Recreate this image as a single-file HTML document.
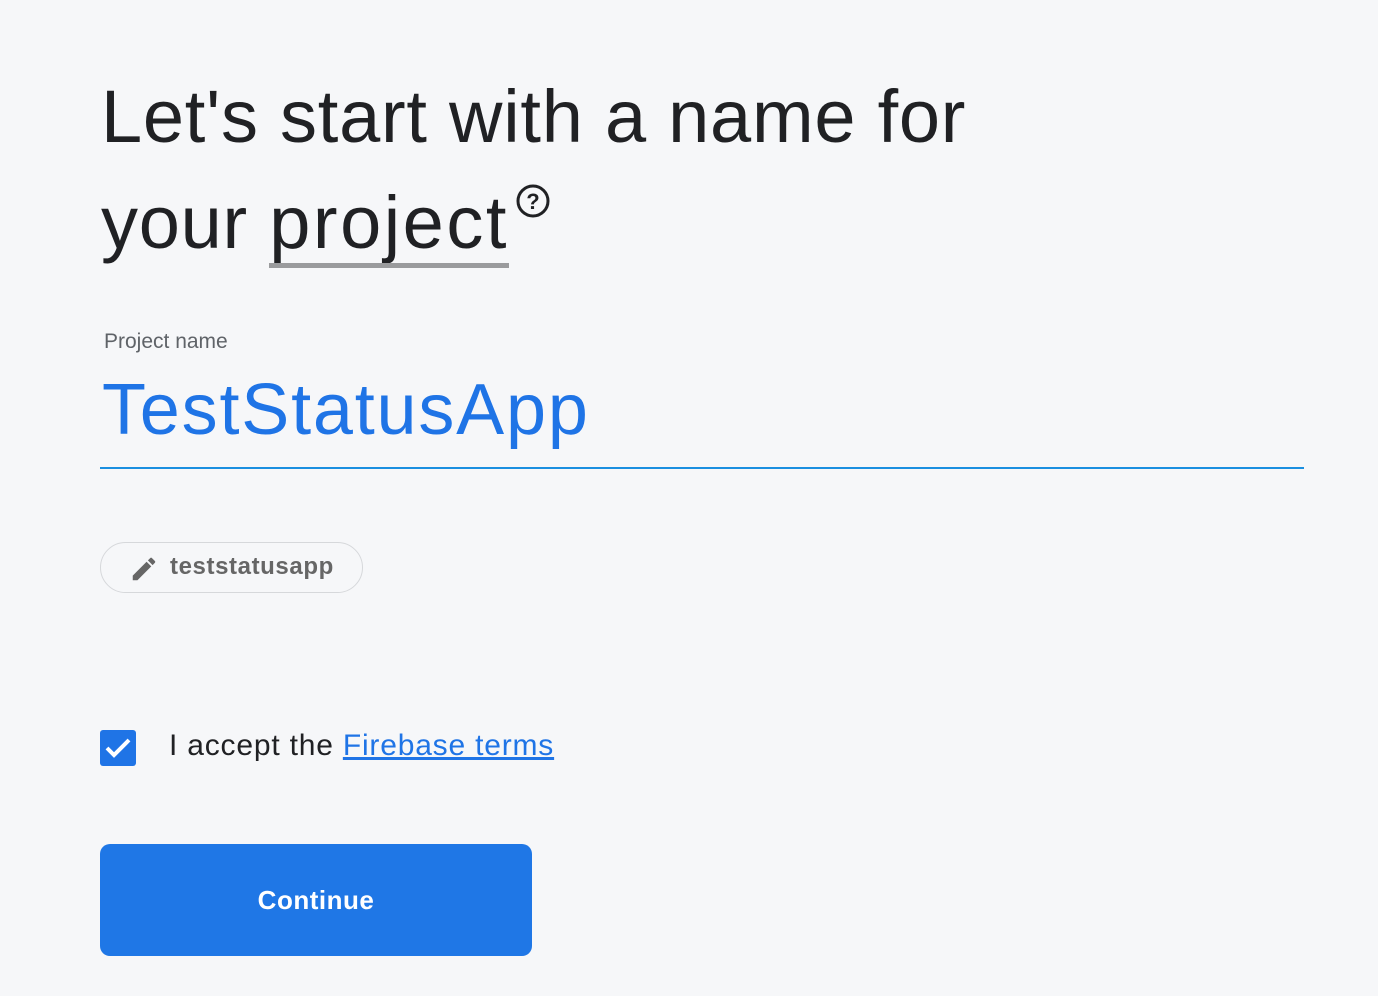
<!DOCTYPE html>
<html><head><meta charset="utf-8"><style>
body{margin:0;background:#f6f7f9;width:1378px;height:996px;overflow:hidden;font-family:"Liberation Sans",sans-serif;position:relative}
.h{position:absolute;left:101px;font-size:74px;color:#202124;letter-spacing:0.75px;white-space:nowrap;line-height:1}
.lbl{position:absolute;left:104px;top:330px;font-size:21px;color:#5f6368}
.name{position:absolute;left:102px;top:374px;font-size:72px;color:#1f74e6;line-height:1;letter-spacing:1.8px}
.line{position:absolute;left:100px;top:467px;width:1204px;height:2px;background:#1a8fe0}
.chip{position:absolute;left:100px;top:542px;width:261px;height:49px;border:1.5px solid #d6d8db;border-radius:26px}
.chip span{position:absolute;left:69px;top:10px;font-size:24px;color:#666;font-weight:bold;letter-spacing:0.6px}
.cb{position:absolute;left:100px;top:730px;width:36px;height:36px;background:#1f74e6;border-radius:3px}
.acc{position:absolute;left:169px;top:729px;font-size:30px;color:#202124;letter-spacing:0.8px}
.acc a{color:#1f74e6;text-decoration:underline}
.btn{position:absolute;left:100px;top:844px;width:432px;height:112px;background:#1f77e6;border-radius:10px;color:#fff;font-size:26px;font-weight:bold;text-align:center;line-height:112px;letter-spacing:0.5px}
</style></head><body>
<div class="h" style="top:80px">Let's start with a name for</div>
<div class="h" style="top:186px">your <span style="position:relative;letter-spacing:2.5px">project<span style="position:absolute;left:0;right:0;bottom:-4px;height:5px;background:#9a9b9d"></span></span></div>
<svg style="position:absolute;left:515px;top:183px" width="36" height="36" viewBox="0 0 36 36"><circle cx="18" cy="18" r="15" fill="none" stroke="#202124" stroke-width="3"/><text x="18" y="26" font-size="22" font-family="Liberation Sans" font-weight="bold" text-anchor="middle" fill="#202124">?</text></svg>
<div class="lbl">Project name</div>
<div class="name">TestStatusApp</div>
<div class="line"></div>
<div class="chip"><svg style="position:absolute;left:28px;top:11px" width="30" height="30" viewBox="0 0 24 24"><path fill="#666" d="M3 17.25V21h3.75L17.81 9.94l-3.75-3.75L3 17.250zM20.71 7.04a1 1 0 0 0 0-1.41l-2.340-2.34a1 1 0 0 0-1.41 0l-1.83 1.83 3.75 3.75 1.83-1.83z"/></svg><span>teststatusapp</span></div>
<div class="cb"><svg width="36" height="36" viewBox="0 0 36 36"><path d="M7 18l7 7 15-15" fill="none" stroke="#fff" stroke-width="4"/></svg></div>
<div class="acc">I accept the <a>Firebase terms</a></div>
<div class="btn">Continue</div>
</body></html>
